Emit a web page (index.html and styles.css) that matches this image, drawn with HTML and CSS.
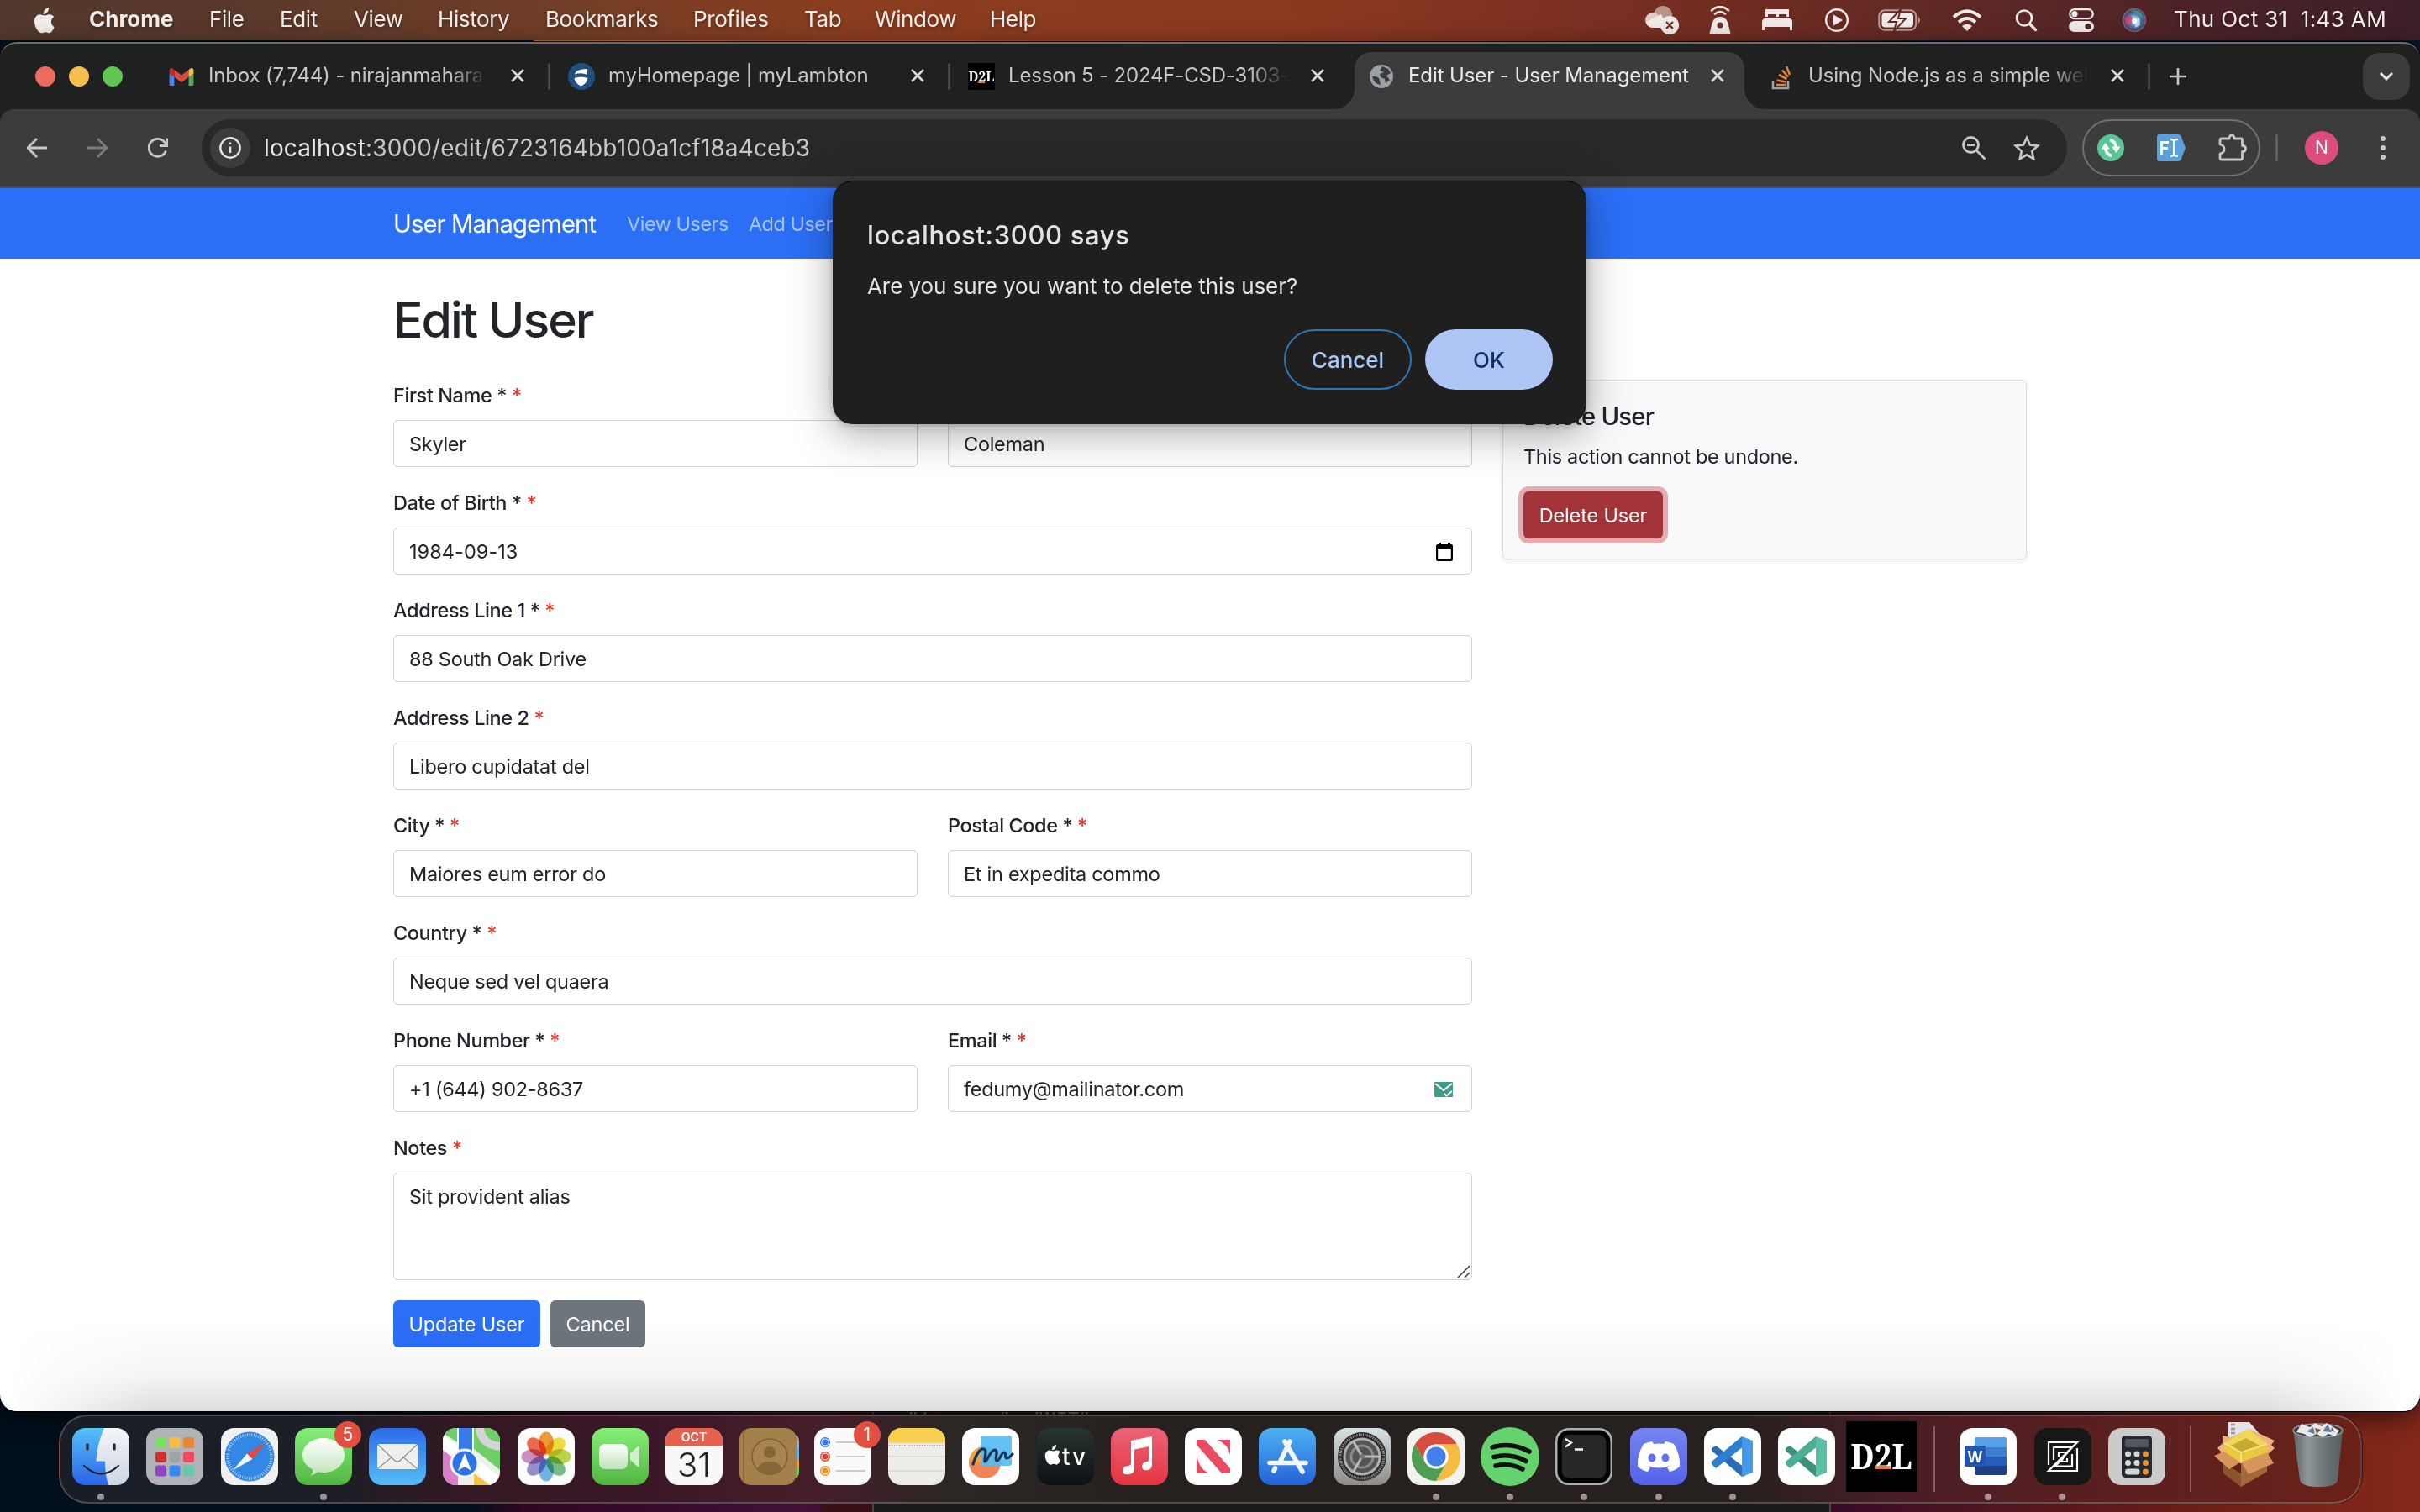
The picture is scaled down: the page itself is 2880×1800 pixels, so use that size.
FILE: index.html
```html
<!DOCTYPE html>
<html lang="en">
<head>
<meta charset="utf-8">
<title>Edit User - User Management</title>
<link rel="stylesheet" href="styles.css">
</head>
<body>
<div class="desktop">
  <div class="editor-behind"><code>"license": "MIT"</code></div>
  <div class="wall-wedge"></div>

  <header class="menubar">
    <nav class="menus">
      <svg class="apple" viewBox="0 0 26 31" width="26" height="31"><path fill="#efecea" d="M18 0c.3 2.400-.7 4.400-1.900 5.800-1.200 1.300-2.800 2.200-4.400 2.100-.3-2.200.8-4.300 1.900-5.500C14.800 1.100 16.600.1 18 0zM24.600 23.200c-1 2.600-3.300 7-6 7.100-1.700 0-2.300-1.100-4.500-1.100s-2.900 1.100-4.500 1.100C5.600 30.400 1 23.100 1 16.600c0-5.200 3.200-8.300 6.600-8.300 2 0 3.900 1.300 5.400 1.300 1.300 0 3.500-1.500 6-1.400 1.800.1 3.900.9 5.200 2.900-4.700 2.900-4 9.700.4 12.100z"/></svg>
      <b>Chrome</b><span>File</span><span>Edit</span><span>View</span><span>History</span><span>Bookmarks</span><span>Profiles</span><span>Tab</span><span>Window</span><span>Help</span>
    </nav>
    <div class="status">
      <svg viewBox="0 0 42 34" width="42" height="34"><circle cx="22" cy="11" r="11" fill="#b99388"/><circle cx="10" cy="17" r="9" fill="#e0cdc8"/><path d="M2 19l18-9 8 16H10q-7-1-8-7z" fill="#efe9e7"/><circle cx="30" cy="23" r="11" fill="#efe9e7"/><path d="M26 19l8 8m0-8l-8 8" stroke="#6d2d22" stroke-width="2.200"/></svg>
      <svg viewBox="0 0 26 34" width="26" height="34" fill="none" stroke="#efe9e7"><path d="M3 5.500q10-9 20 0M7 9.500q6-5 12 0" stroke-width="2.600" stroke-linecap="round"/><path d="M13 13c5 0 8 3 9.500 8l3 12H.5l3-12C5 16 8 13 13 13z" fill="#efe9e7" stroke="none"/><circle cx="13" cy="23" r="3.500" fill="#6d2d22" stroke="none"/></svg>
      <svg viewBox="0 0 36 26" width="36" height="26" fill="#efe9e7"><path d="M4 0h28v9h-3V6h-9v3h-4V6H7v3H4zM3 11h30q3 1 3 4v10h-3v-4H3v4H0V15q0-3 3-4z"/></svg>
      <svg viewBox="0 0 30 30" width="30" height="30"><circle cx="15" cy="15" r="12.800" fill="none" stroke="#efe9e7" stroke-width="2.400"/><path d="M11 8.500l11 6.500-11 6.500z" fill="#efe9e7"/></svg>
      <svg viewBox="0 0 52 26" width="52" height="26"><rect x="1.200" y="1.200" width="44" height="23.600" rx="7" fill="none" stroke="#b49a96" stroke-width="2"/><rect x="4.500" y="4.500" width="37.500" height="17" rx="4" fill="#efe9e7"/><path d="M48 9q4 4 0 8z" fill="#b49a96"/><path d="M27 0L13 15h9l-3 11 14-15h-9l3-11z" fill="#efe9e7" stroke="#5f2823" stroke-width="2"/></svg>
      <svg viewBox="0 0 36 26" width="36" height="26" fill="none" stroke="#efe9e7" stroke-width="4"><path d="M2 9.500q16-14.500 32 0M8 15.500q10-9 20 0"/><path d="M12 20q6-5 12 0l-6 6z" fill="#efe9e7" stroke="none"/></svg>
      <svg viewBox="0 0 28 28" width="28" height="28" fill="none" stroke="#efe9e7" stroke-width="2.600"><circle cx="12" cy="11.500" r="9"/><path d="M18.500 18.500l7 7" stroke-width="3.400" stroke-linecap="round"/></svg>
      <svg viewBox="0 0 30 28" width="30" height="28"><rect x="1.200" y="1.200" width="27.600" height="11" rx="5.500" fill="none" stroke="#efe9e7" stroke-width="2.200"/><circle cx="7" cy="6.700" r="3.600" fill="#efe9e7"/><rect x="0" y="15" width="30" height="13" rx="6.500" fill="#efe9e7"/><circle cx="23" cy="21.500" r="3.600" fill="#54262a"/></svg>
      <svg viewBox="0 0 28 28" width="28" height="28"><defs><radialGradient id="siri"><stop offset="0" stop-color="#fff"/><stop offset=".25" stop-color="#9fc3e8"/><stop offset=".6" stop-color="#4a6f9a"/><stop offset="1" stop-color="#4b3b5c"/></radialGradient></defs><circle cx="14" cy="14" r="13.400" fill="url(#siri)" stroke="#7d6f80" stroke-width="1.200"/><path d="M2 12q6-9 12 3-6 8-10 4z" fill="#d23d70" opacity=".75"/><path d="M10 2q14 0 15 10-8-5-15-10z" fill="#2fa982" opacity=".75"/><path d="M14 14l6-3 1 9-6 3z" fill="#cfe6f8" opacity=".8"/><circle cx="14" cy="15" r="3" fill="#fff"/></svg>
      <span class="clock">Thu Oct 31&nbsp; 1:43 AM</span>
    </div>
  </header>

  <main class="window">
    <div class="tabstrip">
      <div class="lights"><i class="red"></i><i class="yellow"></i><i class="green"></i></div>
      <div class="tab first">
        <svg class="fav" viewBox="0 0 32 24" width="30" height="23"><path fill="#4a84ee" d="M1 8v13q0 2 2 2h4V11z"/><path fill="#55a95a" d="M31 8v13q0 2-2 2h-4V11z"/><path fill="#d94c3f" d="M7 3l9 7 9-7v9l-9 7-9-7z"/><path fill="#b7342b" d="M1 4q0-3 3-3l3 2v9L1 8z"/><path fill="#f2bd42" d="M31 4q0-3-3-3l-3 2v9l6-4z"/></svg>
        <span class="title fade">Inbox (7,744) - nirajanmahara</span><svg class="x" viewBox="0 0 16 16"><path d="M1 1l14 14M15 1L1 15"/></svg>
      </div>
      <div class="tab">
        <svg class="fav" viewBox="0 0 32 32" width="32" height="32"><circle cx="16" cy="16" r="16" fill="#205081"/><path fill="#fff" d="M8 13.500Q9 7 23 7v7q-7-3-15-.5zM7.500 18q8.500-3 16 0-.5 6-8 9.500Q8 24 7.500 18z"/></svg>
        <span class="title">myHomepage | myLambton</span><svg class="x" viewBox="0 0 16 16"><path d="M1 1l14 14M15 1L1 15"/></svg>
      </div>
      <div class="tab nobar">
        <svg class="fav" viewBox="0 0 32 32" width="32" height="32"><rect width="32" height="32"/><text x="16" y="22" text-anchor="middle" textLength="31" lengthAdjust="spacingAndGlyphs" class="serif" font-size="17" fill="#fff">D2L</text><path d="M12 22h8v2h-8z" fill="#e87d37"/></svg>
        <span class="title fade">Lesson 5 - 2024F-CSD-3103-</span><svg class="x" viewBox="0 0 16 16"><path d="M1 1l14 14M15 1L1 15"/></svg>
      </div>
      <div class="tab active nobar">
        <svg class="fav" viewBox="0 0 28 28" width="28" height="28"><circle cx="14" cy="14" r="14" fill="#9aa0a6"/><path fill="#3c3c3c" d="M3 14q4-1 8 2l1 3 1 5q-8-1-10-10zM15 2l7 3 3 5-5 3 4 5-5 4-1-5-5-2-1-4 5-2-5-2z"/></svg>
        <span class="title">Edit User - User Management</span><svg class="x" viewBox="0 0 16 16"><path d="M1 1l14 14M15 1L1 15"/></svg>
      </div>
      <div class="tab">
        <svg class="fav" viewBox="0 0 32 32" width="32" height="32" fill="none"><path d="M6 21v9h18v-9" stroke="#9d9fa3" stroke-width="2.600"/><path d="M10 26h11M10.500 20.500l10.500 2M13 14l9.500 5M17 8.500l7 8M22 4l4 10" stroke="#e2823c" stroke-width="2.600"/></svg>
        <span class="title fade">Using Node.js as a simple web</span><svg class="x" viewBox="0 0 16 16"><path d="M1 1l14 14M15 1L1 15"/></svg>
      </div>
      <svg class="plus" viewBox="0 0 20 20" width="20" height="20"><path d="M10 0v20M0 10h20" stroke="#c8c8c8" stroke-width="2.600"/></svg>
      <div class="tabsearch"><svg viewBox="0 0 16 10" width="16" height="10"><path d="M1 1l7 7 7-7" fill="none" stroke="#e3e3e3" stroke-width="3"/></svg></div>
    </div>

    <div class="toolbar">
      <svg class="tool" viewBox="0 0 24 24"><path d="M12 1L1 12l11 11M1.500 12H24" stroke="#c7c7c7"/></svg>
      <svg class="tool" viewBox="0 0 24 24"><path d="M12 1l11 11-11 11M22.500 12H0" stroke="#7b7b7b"/></svg>
      <svg class="tool" viewBox="0 0 24 24"><path d="M21.500 15.500A10.500 10.500 0 1 1 20 5.500l2.500 3.500M23 .5V9.500H14" stroke="#c7c7c7"/></svg>
      <div class="omnibox">
        <div class="info"><svg viewBox="0 0 26 26" width="26" height="26"><circle cx="13" cy="13" r="11.700" fill="none" stroke="#e3e3e3" stroke-width="2.400"/><path d="M13 11.500v7.500M13 6.500v2.600" stroke="#e3e3e3" stroke-width="2.600"/></svg></div>
        <span class="url"><em>localhost</em>:3000/edit/6723164bb100a1cf18a4ceb3</span>
        <svg viewBox="0 0 30 30" width="30" height="30" fill="none" stroke="#c7c7c7" stroke-width="2.800"><circle cx="11.500" cy="11.500" r="9"/><path d="M7 11.500h9M18.500 18.500L28.500 28.500"/></svg>
        <svg class="star" viewBox="0 0 32 30" width="32" height="30" fill="none" stroke="#c7c7c7" stroke-width="2.600"><path d="M16 3l3.900 8.600 9.300 1-7 6.300 2 9.200-8.200-4.800-8.200 4.800 2-9.200-7-6.300 9.300-1z"/></svg>
      </div>
      <div class="extensions">
        <svg viewBox="0 0 32 32" width="32" height="32"><circle cx="16" cy="16" r="16" fill="#58c795"/><g fill="none" stroke="#fff" stroke-width="3.600"><path d="M17 25.500q-7-2-7.300-10M15 6.500q7 2 7.300 10"/></g><path fill="#fff" d="M4.500 17.500L9.500 10l5.500 7.500zM17 14.500h10.500L22.500 22z"/></svg>
        <svg viewBox="0 0 34 32" width="34" height="32"><path d="M3 0h22q3 0 4 3l5 13-5 13q-1 3-4 3H3q-3 0-3-3V3q0-3 3-3z" fill="#5ba0da"/><path d="M5.500 24V9.500H14M5.500 16.500H13" stroke="#fff" stroke-width="3" fill="none"/><path d="M16 6q4 0 4 3v14q0 3-4 3M25 6q-5 0-5 3M20 23q0 3 5 3" stroke="#fff" stroke-width="2" fill="none"/></svg>
        <svg viewBox="0 0 34 32" width="34" height="32" fill="none" stroke="#c7c7c7" stroke-width="2.800" stroke-linejoin="round"><path d="M4 5h9q0-4 3-4t3 4h8q1.500 0 1.500 2v6.500q4 0 4 3.500t-4 3.500v7.500q0 2-2 2H4q-2 0-2-2v-5q5-1 5-5.500T2 12V7Q2 5 4 5z"/></svg>
      </div>
      <i class="bar"></i>
      <div class="avatar">N</div>
      <div class="dots"><i></i><i></i><i></i></div>
    </div>

    <section class="page">
      <nav class="navbar"><a class="brand">User Management</a><a>View Users</a><a>Add User</a></nav>
      <div class="content">
        <h1>Edit User</h1>
        <div class="columns">
          <form class="form">
            <div class="field half"><label>First Name * <u>*</u></label><div class="input">Skyler</div></div>
            <div class="field half"><label>Last Name * <u>*</u></label><div class="input">Coleman</div></div>
            <div class="field"><label>Date of Birth * <u>*</u></label><div class="input date">1984-09-13<svg viewBox="0 0 20 22" width="20" height="22"><path d="M3 0h3v2h8V0h3v2h1q2 0 2 2v16q0 2-2 2H2q-2 0-2-2V4q0-2 2-2h1zM2.200 7v12.800h15.600V7z" fill-rule="evenodd"/></svg></div></div>
            <div class="field"><label>Address Line 1 * <u>*</u></label><div class="input">88 South Oak Drive</div></div>
            <div class="field"><label>Address Line 2 <u>*</u></label><div class="input">Libero cupidatat del</div></div>
            <div class="field half"><label>City * <u>*</u></label><div class="input">Maiores eum error do</div></div>
            <div class="field half"><label>Postal Code * <u>*</u></label><div class="input">Et in expedita commo</div></div>
            <div class="field"><label>Country * <u>*</u></label><div class="input">Neque sed vel quaera</div></div>
            <div class="field half"><label>Phone Number * <u>*</u></label><div class="input">+1 (644) 902-8637</div></div>
            <div class="field half"><label>Email * <u>*</u></label><div class="input">fedumy@mailinator.com<svg viewBox="0 0 22 18" width="22" height="18"><rect width="22" height="18" rx="1" fill="#3f9c86"/><path d="M1 2l10 8L21 2" stroke="#fff" stroke-width="2" fill="none"/><path d="M12 14l2.500 2.500L21 11" stroke="#fff" stroke-width="2" fill="none"/></svg></div></div>
            <div class="field"><label>Notes <u>*</u></label><div class="input area">Sit provident alias<svg viewBox="0 0 16 16" width="16" height="16"><path d="M1 15L15 1M9 15l6-6" stroke="#444" stroke-width="1.600"/></svg></div></div>
            <div class="actions"><span class="btn update">Update User</span><span class="btn cancel">Cancel</span></div>
          </form>
          <aside class="card">
            <h5>Delete User</h5>
            <p>This action cannot be undone.</p>
            <span class="btn delete">Delete User</span>
          </aside>
        </div>
      </div>
      <div class="floor-shade"></div>
    </section>

    <div class="dialog">
      <h2>localhost:3000 says</h2>
      <p>Are you sure you want to delete this user?</p>
      <div class="choices"><span class="pill outline">Cancel</span><span class="pill solid">OK</span></div>
    </div>
  </main>

  <footer class="dock">
    <div class="slot run"><svg viewBox="0 0 68 68"><defs><linearGradient id="fb" x2="0" y2="1"><stop stop-color="#54c1f8"/><stop offset="1" stop-color="#2b63e8"/></linearGradient><linearGradient id="silver" x2="0" y2="1"><stop stop-color="#f4f5f6"/><stop offset="1" stop-color="#cdd6e2"/></linearGradient><clipPath id="sq"><rect width="68" height="68" rx="15.500"/></clipPath></defs><g clip-path="url(#sq)"><path fill="url(#fb)" d="M0 0h68v68H0z"/><path fill="url(#silver)" d="M38 0Q29 20 28.500 39.500H39Q39 56 43 68h25V0z"/></g><path d="M18 20v5M50 20v5" stroke="#26303c" stroke-width="3.500" stroke-linecap="round"/><path d="M14 45q20 19 41 0" fill="none" stroke="#172436" stroke-width="2.200" stroke-linecap="round"/></svg></div>
    <div class="slot"><svg viewBox="0 0 68 68"><rect width="68" height="68" rx="15.500" fill="#b1b2b6"/><g><rect x="11" y="11" width="13" height="13" rx="3" fill="#76e35a"/><rect x="27.500" y="11" width="13" height="13" rx="3" fill="#f5bd41"/><rect x="44" y="11" width="13" height="13" rx="3" fill="#e78735"/><rect x="11" y="28" width="13" height="13" rx="3" fill="#c9342c"/><rect x="27.500" y="28" width="13" height="13" rx="3" fill="#9ca4a8"/><rect x="44" y="28" width="13" height="13" rx="3" fill="#ec4c5e"/><rect x="11" y="44.500" width="13" height="13" rx="3" fill="#8f43c9"/><rect x="27.500" y="44.500" width="13" height="13" rx="3" fill="#3488f0"/><rect x="44" y="44.500" width="13" height="13" rx="3" fill="#66c9ae"/></g></svg></div>
    <div class="slot"><svg viewBox="0 0 68 68"><rect width="68" height="68" rx="15.500" fill="#f1f1f1"/><circle cx="34" cy="34" r="29.500" fill="#3388e6"/><circle cx="34" cy="34" r="26" fill="none" stroke="#c8e0fb" stroke-width="3.600" stroke-dasharray=".8 1.900"/><path d="M54 17L31 30.500l6.500 6.500z" fill="#e8463c"/><path d="M14 50.500L31 30.500l6.500 6.500z" fill="#f4f4f4"/></svg></div>
    <div class="slot run"><svg viewBox="0 0 68 68"><defs><linearGradient id="gr" x2="0" y2="1"><stop stop-color="#85ef79"/><stop offset="1" stop-color="#51b541"/></linearGradient><linearGradient id="pearl" x2="0" y2="1"><stop stop-color="#fff"/><stop offset="1" stop-color="#bfe3b8"/></linearGradient></defs><rect width="68" height="68" rx="15.500" fill="url(#gr)"/><path d="M34 12c14 0 25 9 25 20.500S48 53 34 53q-4 0-7-.8Q23 56 18.500 56.500q3-3 2.500-7Q9 43 9 32.500C9 21 20 12 34 12z" fill="url(#pearl)"/></svg><i class="badge">5</i></div>
    <div class="slot"><svg viewBox="0 0 68 68"><defs><linearGradient id="ml" x2="0" y2="1"><stop stop-color="#2c6ae8"/><stop offset="1" stop-color="#56bdf6"/></linearGradient></defs><rect width="68" height="68" rx="15.500" fill="url(#ml)"/><rect x="10" y="19" width="48" height="30" rx="3" fill="#efefee"/><path d="M11 20l19 18q4 4 8 0L57 20M11 48l17-14M57 48L40 34" fill="none" stroke="#8f9394" stroke-width="1.200"/></svg></div>
    <div class="slot"><svg viewBox="0 0 68 68"><g clip-path="url(#sq)"><path fill="#eef0ee" d="M0 0h68v68H0z"/><path fill="#6fcf66" d="M0 0h17v17L0 6zM37 0h31v50L37 25z"/><path d="M68 22q-22-2-24-22" fill="none" stroke="#d3d4d8" stroke-width="10"/><path fill="#d77fc7" d="M0 26l18 14v28H0z"/><path fill="#f3c547" d="M37 47l22 21H37z"/><path fill="#fff" d="M0 8l68 50v10H56L0 26z"/><path fill="#377ae8" stroke="#fff" stroke-width="2" d="M18-2h18v44H18z"/></g><circle cx="26" cy="42" r="16" fill="#2c74e8" stroke="#f2f4f8" stroke-width="3"/><path d="M26 30l8 21-8-5-8 5z" fill="#fff"/></svg></div>
    <div class="slot"><svg viewBox="0 0 68 68"><rect width="68" height="68" rx="15.500" fill="#fcfcfb"/><g class="petals"><ellipse cx="34" cy="18" rx="9" ry="13.500" fill="#f09a38"/><ellipse cx="34" cy="18" rx="9" ry="13.500" fill="#f0df43" transform="rotate(45 34 34)"/><ellipse cx="34" cy="18" rx="9" ry="13.500" fill="#bdd54c" transform="rotate(90 34 34)"/><ellipse cx="34" cy="18" rx="9" ry="13.500" fill="#79c08a" transform="rotate(135 34 34)"/><ellipse cx="34" cy="18" rx="9" ry="13.500" fill="#73b6e4" transform="rotate(180 34 34)"/><ellipse cx="34" cy="18" rx="9" ry="13.500" fill="#9a90d0" transform="rotate(225 34 34)"/><ellipse cx="34" cy="18" rx="9" ry="13.500" fill="#cd92c4" transform="rotate(270 34 34)"/><ellipse cx="34" cy="18" rx="9" ry="13.500" fill="#ee6a50" transform="rotate(315 34 34)"/></g></svg></div>
    <div class="slot"><svg viewBox="0 0 68 68"><rect width="68" height="68" rx="15.500" fill="url(#gr)"/><rect x="9" y="19" width="34" height="30" rx="7" fill="url(#pearl)"/><path d="M46 30l9-8q2-1 2 1v22q0 2-2 1l-9-8z" fill="#d3edcf"/></svg></div>
    <div class="slot"><svg viewBox="0 0 68 68"><g clip-path="url(#sq)"><path fill="#f9f8f6" d="M0 0h68v68H0z"/><path fill="#e6604f" d="M0 0h68v21H0z"/></g><text x="34" y="16" text-anchor="middle" class="sans" font-size="14" font-weight="600" fill="#fff">OCT</text><text x="34" y="58" text-anchor="middle" class="sans" font-size="40" font-weight="300" fill="#222" textLength="40">31</text></svg></div>
    <div class="slot"><svg viewBox="0 0 68 68"><path d="M60 9h7q3 2 3 8v34q0 6-3 8h-7z" fill="#e8973a"/><path d="M60 9h7q3 2 3 14H60z" fill="#a4b6b4"/><path d="M60 24h10v14H60z" fill="#65b2e0"/><path d="M60 48h10q0 8-3 11h-7z" fill="#63cf62"/><rect x="-1" width="68" height="68" rx="14" fill="#a4804b"/><path d="M4 3v62" stroke="#866636" stroke-width="1.500"/><circle cx="35" cy="34" r="21" fill="#a8844e" stroke="#7d6035" stroke-width="1.500"/><circle cx="35" cy="29" r="7" fill="#846639"/><path d="M20 49q4-9 15-9t15 9q-6 6-15 6t-15-6z" fill="#846639"/></svg></div>
    <div class="slot"><svg viewBox="0 0 68 68"><rect width="68" height="68" rx="15.500" fill="#fafaf9"/><g fill="none" stroke-width="1.400"><circle cx="13" cy="17" r="5.300" stroke="#2f78ee"/><circle cx="13" cy="34" r="5.300" stroke="#dc4238"/><circle cx="13" cy="51" r="5.300" stroke="#e8912d"/></g><circle cx="13" cy="17" r="3.600" fill="#2f78ee"/><circle cx="13" cy="34" r="3.600" fill="#dc4238"/><circle cx="13" cy="51" r="3.600" fill="#e8912d"/><path d="M26 17h35M26 34h35M26 51h35" stroke="#bdbdbd" stroke-width="1.500"/></svg><i class="badge">1</i></div>
    <div class="slot"><svg viewBox="0 0 68 68"><g clip-path="url(#sq)"><path fill="#eeece8" d="M0 0h68v68H0z"/><path fill="#f6cf4c" d="M0 0h68v17H0z"/></g><path d="M0 18h68M0 34h68M0 51h68" stroke="#cfcdc9" stroke-width="1.200"/><path d="M1 20.500h66" stroke="#9c9a96" stroke-width="1.200" stroke-dasharray="1.200 1.800"/></svg></div>
    <div class="slot"><svg viewBox="0 0 68 68"><rect width="68" height="68" rx="15.500" fill="#fff"/><circle cx="27" cy="41" r="19" fill="#ef8558"/><path d="M8 41a19 19 0 0 1 19-19v19z" fill="#f1a343"/><rect x="22" y="9" width="37" height="36" rx="3" fill="#55bdf0" opacity=".92"/><path d="M13 43C17 30 22 24 26 25c5 2-1 14 1 15 3 1 6-14 12-14 5 1-1 12 2 13 4 1 5-10 9-10 3 0 0 6 3 7 3 0 5-3 7-5" fill="none" stroke="#15365c" stroke-width="3.200" stroke-linecap="round"/></svg></div>
    <div class="slot"><svg viewBox="0 0 68 68"><defs><linearGradient id="tv" x2="0" y2="1"><stop stop-color="#283532"/><stop offset="1" stop-color="#0d1114"/></linearGradient></defs><rect width="68" height="68" rx="15.500" fill="url(#tv)"/><path fill="#fff" transform="translate(9 20) scale(.78)" d="M18 0c.3 2.400-.7 4.400-1.900 5.800-1.200 1.300-2.800 2.200-4.400 2.100-.3-2.200.8-4.300 1.900-5.500C14.800 1.100 16.600.1 18 0zM24.600 23.200c-1 2.600-3.300 7-6 7.100-1.700 0-2.300-1.100-4.500-1.100s-2.900 1.100-4.500 1.100C5.600 30.400 1 23.100 1 16.600c0-5.200 3.200-8.300 6.600-8.300 2 0 3.900 1.300 5.400 1.300 1.300 0 3.500-1.500 6-1.400 1.800.1 3.900.9 5.200 2.900-4.700 2.900-4 9.700.4 12.100z"/><text x="30" y="44" class="sans" font-size="28" font-weight="500" fill="#fff" textLength="28">tv</text></svg></div>
    <div class="slot"><svg viewBox="0 0 68 68"><defs><linearGradient id="mu" x2="0" y2="1"><stop stop-color="#ea6377"/><stop offset="1" stop-color="#e63440"/></linearGradient></defs><rect width="68" height="68" rx="15.500" fill="url(#mu)"/><path d="M24 15l25-5v34q0 5-5 6-7 1-7-4 0-5 6-6 2 0 2-3V22l-17 3.500V48q0 6-6 7-8 1-8-4 0-5 6-6 4 0 4-3z" fill="#fff"/></svg></div>
    <div class="slot"><svg viewBox="0 0 68 68"><rect width="68" height="68" rx="15.500" fill="#fff"/><path d="M14 14h10l30 34v6H44L14 20zM14 28v26h15q-14-6-15-26zM39 14h15v18q-2-12-15-18z" fill="#ea4b62"/></svg></div>
    <div class="slot"><svg viewBox="0 0 68 68"><defs><linearGradient id="as" x2="0" y2="1"><stop stop-color="#4db2f2"/><stop offset="1" stop-color="#2561d8"/></linearGradient></defs><rect width="68" height="68" rx="15.500" fill="url(#as)"/><path d="M13 41.500h43M37 16L25 41M31 16l21 36M18 51l1.500-3" stroke="#f2f6fb" stroke-width="5.600" stroke-linecap="round"/></svg></div>
    <div class="slot"><svg viewBox="0 0 68 68"><defs><linearGradient id="st" x2="0" y2="1"><stop stop-color="#d7e0e4"/><stop offset="1" stop-color="#8d8c88"/></linearGradient></defs><rect width="68" height="68" rx="15.500" fill="url(#st)"/><circle cx="34" cy="34" r="29" fill="#2b2b2b"/><circle cx="34" cy="34" r="26" fill="none" stroke="#8f8f8d" stroke-width="3" stroke-dasharray="1.300 1.200"/><circle cx="34" cy="34" r="21" fill="#555" stroke="#aeb0b0" stroke-width="3"/><circle cx="34" cy="34" r="13" fill="none" stroke="#8b8b8a" stroke-width="3"/><path d="M34 34h22M34 34L23 15M34 34L23 53" stroke="#b9bbbb" stroke-width="3"/><circle cx="34" cy="34" r="3" fill="#777"/></svg></div>
    <div class="slot run"><svg viewBox="0 0 68 68"><rect width="68" height="68" rx="15.500" fill="#f2f2f1"/><path fill="#d84d3d" d="M8.900 19.500A29 29 0 0 1 59.100 19.500H34A14.500 14.500 0 0 0 21.400 41.250z"/><path fill="#f2bd42" d="M59.100 19.500A29 29 0 0 1 34 63L46.600 41.250A14.500 14.500 0 0 0 34 19.500z"/><path fill="#4d9e53" d="M34 63A29 29 0 0 1 8.900 19.500L21.400 41.250A14.500 14.500 0 0 0 46.600 41.250z"/><circle cx="34" cy="34" r="14.500" fill="#fff"/><circle cx="34" cy="34" r="11.500" fill="#4280ea"/></svg></div>
    <div class="slot run"><svg viewBox="0 0 68 68"><circle cx="34" cy="34" r="35" fill="#65d36e"/><path d="M13 23q22-7 44 5M15 34.500q20-5 38 5M17 45q17-4 32 4" fill="none" stroke="#101310" stroke-linecap="round" stroke-width="5.500"/></svg></div>
    <div class="slot run"><svg viewBox="0 0 68 68"><rect width="68" height="68" rx="15.500" fill="#a6b0b2"/><rect x="2.500" y="2.500" width="63" height="63" rx="13.500" fill="#000"/><rect x="7.500" y="8" width="53" height="52" rx="9" fill="#272727"/><path d="M12 13l7 4.500-7 5M23 25.500h10" fill="none" stroke="#fff" stroke-width="2.300"/></svg></div>
    <div class="slot run"><svg viewBox="0 0 68 68"><defs><linearGradient id="dc" x2="0" y2="1"><stop stop-color="#7585ef"/><stop offset="1" stop-color="#5363ea"/></linearGradient></defs><rect width="68" height="68" rx="15.500" fill="url(#dc)"/><path d="M26 16l2 3q6-1 12 0l2-3q6 1 10 3 8 13 7 27-6 5-12 6l-3-5 3-2q-13 5-26 0l3 2-3 5q-6-1-12-6-1-14 7-27 5-2 10-3z" fill="#fff"/><ellipse cx="26" cy="35.500" rx="4.500" ry="5" fill="#6372ec"/><ellipse cx="42" cy="35.500" rx="4.500" ry="5" fill="#6372ec"/></svg></div>
    <div class="slot run"><svg viewBox="0 0 68 68"><rect width="68" height="68" rx="15.500" fill="#fff"/><path fill="#2b6cb5" d="M9 24l5-3 34 26 1 10-4 1L9 27z"/><path fill="#2f7fd0" d="M9 43l5 5 34-27-3-11L9 40z"/><path fill="#4499e8" d="M45 10l13 5v38l-13 5z"/></svg></div>
    <div class="slot"><svg viewBox="0 0 68 68"><rect width="68" height="68" rx="15.500" fill="#fff"/><path fill="#3c917a" d="M9 24l5-3 34 26 1 10-4 1L9 27z"/><path fill="#4cae94" d="M9 43l5 5 34-27-3-11L9 40z"/><path fill="#5bbfa6" d="M45 10l13 5v38l-13 5z"/></svg></div>
    <div class="slot"><svg class="big" viewBox="0 0 84 84"><path d="M0 0h84v84H0z"/><text x="42" y="57" text-anchor="middle" textLength="73" lengthAdjust="spacingAndGlyphs" class="serif" font-size="41" fill="#fff">D2L</text><path d="M34 53h18v4H34z" fill="#e87d37"/></svg></div>
    <i class="split"></i>
    <div class="slot run"><svg viewBox="0 0 68 68"><rect width="68" height="68" rx="15.500" fill="#fff"/><path fill="#58a2e9" d="M20 11h34q2 0 2 2v10H18V13q0-2 2-2z"/><path fill="#3c7ed0" d="M18 23h38v11H18z"/><path fill="#2a5cbb" d="M18 34h38v11H18z"/><path fill="#1c3f88" d="M18 45h38v9q0 2-2 2H20q-2 0-2-2z"/><rect x="6" y="21" width="25" height="25" rx="2" fill="#2453b0"/><text x="18.500" y="40.500" text-anchor="middle" class="sans" font-size="18" font-weight="600" fill="#fff">W</text></svg></div>
    <div class="slot run"><svg viewBox="0 0 68 68"><rect width="68" height="68" rx="15.500" fill="#171717"/><path d="M17 44V17h34L17 51h34V24M23 38V23h22L25 45.500h20V31M29 34v-5h9l-6 11h7v-4" fill="none" stroke="#fff" stroke-width="2.200"/></svg></div>
    <div class="slot"><svg viewBox="0 0 68 68"><rect width="68" height="68" rx="15.500" fill="#cbcbc9"/><rect x="16" y="9" width="36" height="50" rx="4.500" fill="#272b31"/><rect x="20" y="13" width="28" height="10" rx="2" fill="#53575b"/><g fill="#d5d6d6"><circle cx="23.500" cy="31" r="3.500"/><circle cx="34" cy="31" r="3.500"/><circle cx="23.500" cy="41.500" r="3.500"/><circle cx="34" cy="41.500" r="3.500"/><rect x="20" y="48.500" width="17.500" height="7" rx="3.500"/></g><g fill="#ea9132"><circle cx="44.500" cy="31" r="3.500"/><circle cx="44.500" cy="41.500" r="3.500"/><circle cx="44.500" cy="52" r="3.500"/></g></svg></div>
    <i class="split"></i>
    <div class="slot"><svg class="big" viewBox="0 0 84 84"><path d="M22 1h26l12 14v30H22z" fill="#e4e4e6"/><path d="M26 4h5M26 9h5M26 14h5" stroke="#999" stroke-width="2.500"/><path d="M16 17l10 2 22-10 30 14-4 5 4 4-9 8-31 10-26-8 2-6-4-4 6-6z" fill="#ecb47c"/><path d="M17 50l21 12v16L17 62z" fill="#8a552c"/><path d="M38 48v30l31-18V38z" fill="#a2673a"/><path d="M18 26L47 9l22 18v10L38 50 18 39z" fill="#e8c93f"/><path d="M18 26L47 9l22 18-31 10z" fill="#f0d757"/><path d="M26 29l18-9 16 9-22 8z" fill="#c8a934"/><path d="M18 26l20 11 31-10M38 37v13" fill="none" stroke="#f8e98a" stroke-width="1.500"/><path d="M37 49L18 36 6 41l18 16zM38 49l31-12 8 13-30 13z" fill="#d8965d"/></svg></div>
    <div class="slot"><svg class="big" viewBox="0 0 84 84"><defs><linearGradient id="tr"><stop stop-color="#5d6569"/><stop offset=".3" stop-color="#90989b"/><stop offset=".6" stop-color="#70787c"/><stop offset="1" stop-color="#565d61"/></linearGradient></defs><path d="M12 10h59l-6 60q-1 8-22 8t-23-8z" fill="url(#tr)"/><ellipse cx="41.500" cy="11" rx="29.500" ry="8" fill="#373c40" stroke="#90979a" stroke-width="1.500"/><path d="M16 13l6-10 10 4 6-5 8 4 6-4 8 5 7 4-5 7-8-3-7 4-7-4-8 4-7-4z" fill="#e9e9e7"/><path d="M28 12l8-5 2 8zM47 12l6-8 5 9z" fill="#607fa0"/><path d="M38 8l7 2-5 5zM58 7l4 6-5-2z" fill="#7a5a50"/></svg></div>
  </footer>
</div>
</body>
</html>
```
FILE: styles.css
```css
* { box-sizing: border-box; }
body { margin: 0; font-family: Inter, "Liberation Sans", sans-serif; }
i, em, u { font-style: normal; text-decoration: none; }
.sans { font-family: Inter, sans-serif; }
.serif { font-family: "Noto Serif", "DejaVu Serif", "Liberation Serif", serif; font-weight: 700; }

.desktop {
  position: relative; width: 2880px; height: 1800px; overflow: hidden;
  display: flex; flex-direction: column;
  background:
    linear-gradient(90deg, #03101d 0 634px, #c4701f 636px, #b3521f 1100px, #7a2a18 2000px, #06152a 2300px, #0a1428 100%) 0 0 / 100% 72px no-repeat,
    linear-gradient(90deg, #020f1c 0, #03101b 560px, #300620 620px, #42103a 960px, #3c0d14 1030px, #3c0d14 1100px, #380b28 2180px, #471222 2300px, #6a1d18 2600px, #86291a 2880px);
}
.editor-behind {
  position: absolute; left: 1038px; top: 1600px; width: 1141px; height: 200px;
  background: #1b1b1c; border-left: 2px solid #4a4648; border-right: 2px solid #4a4648;
  padding: 78px 0 0 40px;
}
.editor-behind code { font: 23px/26px "Liberation Mono", monospace; color: #777; letter-spacing: -.2px; }
.wall-wedge {
  position: absolute; left: 960px; top: 1790px; width: 78px; height: 10px;
  background: #3a1016; clip-path: polygon(12px 0, 100% 0, 100% 100%, 20px 100%);
}

/* Menu bar */
.menubar {
  position: relative; height: 48px; flex: none; display: flex; justify-content: space-between; align-items: center;
  background: linear-gradient(90deg, #52382d 0, #5b392b 300px, #733e26 700px, #8b3d20 1000px, #8c3a1f 1500px, #7b2f22 1900px, #6b2b23 2150px, #562627 2450px, #3d1f29 2880px);
  color: #f3eeeb; font-size: 26px; text-shadow: 0 2px 4px rgba(0,0,0,.35);
}
.menus { display: grid; grid-template-columns: 66px 143px 84px 88px 100px 128px 176px 132px 84px 137px 100px; padding: 0 0 4px 40px; align-items: center; white-space: nowrap; letter-spacing: -.4px; }
.menus b { letter-spacing: 0; }
.menus .apple { margin-top: 4px; }
.status { display: grid; grid-template-columns: 77px 63px 74px 64px 88px 74px 65px 64px 61px 255px; align-items: center; padding-right: 38px; }
.clock { white-space: nowrap; letter-spacing: .35px; padding-bottom: 3px; }

/* Browser window */
.window {
  position: relative; margin-top: 2px; height: 1630px; flex: none; display: flex; flex-direction: column;
  border-radius: 20px; background: #1f2120; box-shadow: 0 0 0 1px #000, 0 8px 30px rgba(0,0,0,.6);
}
.tabstrip { height: 80px; flex: none; display: flex; align-items: center; border-radius: 20px 20px 0 0; border-top: 2px solid #696c6b; padding-left: 42px; }
.lights { display: flex; gap: 16px; width: 158px; }
.lights i { width: 24px; height: 24px; border-radius: 50%; }
.red { background: #ec6a5e; } .yellow { background: #f4bf4f; } .green { background: #61c554; }
.tab { position: relative; width: 476px; height: 68px; flex: none; display: flex; align-items: center; color: #c6c8c7; font-size: 24px; padding-left: 22px; }
.tab::after { content: ""; position: absolute; right: -1px; top: 18px; width: 3px; height: 32px; background: #454746; border-radius: 2px; }
.tab.nobar::after { content: none; }
.tab.first { width: 454px; padding-left: 0; }
.fav { flex: none; width: 32px; margin-right: 16px; }
.title { width: 336px; white-space: nowrap; letter-spacing: -.17px; position: relative; margin-top: -3px; }
.title.fade { -webkit-mask-image: linear-gradient(90deg, #000 85%, transparent 99%); mask-image: linear-gradient(90deg, #000 85%, transparent 99%); }
.x { width: 16px; height: 16px; margin-left: 24px; margin-top: -2px; flex: none; fill: none; stroke: #dadada; stroke-width: 2.600; }
.tab.active { width: 464px; margin-left: 6px; background: #3c3c3c; border-radius: 20px 20px 0 0; height: 68px; margin-top: 10px; padding: 0 0 10px 18px; color: #e8e8e8; }
.tab.active .fav { width: 28px; margin-right: 18px; }
.tab.active .title { letter-spacing: -.1px; }
.tab.active::before { content: ""; position: absolute; left: -24px; right: -24px; bottom: 0; height: 24px; background: radial-gradient(circle at 0 0, transparent 23.500px, #3c3c3c 24px) left / 24px 24px no-repeat, radial-gradient(circle at 100% 0, transparent 23.500px, #3c3c3c 24px) right / 24px 24px no-repeat; }
.tab.active + .tab { width: 482px; padding-left: 28px; }
.plus { margin-left: 24px; margin-top: -1px; }
.tabsearch { margin-left: auto; margin-right: 12px; width: 56px; height: 56px; border-radius: 20px; background: #3c3c3c; display: flex; align-items: center; justify-content: center; }

.toolbar { height: 94px; flex: none; display: flex; align-items: center; background: #3c3c3c; border-bottom: 2px solid #4a4a4a; border-radius: 16px 16px 0 0; padding: 0 36px 0 32px; }
.tool { width: 24px; height: 24px; margin-right: 48px; flex: none; fill: none; stroke-width: 2.800; }
.omnibox { width: 2220px; height: 68px; margin-left: -8px; border-radius: 34px; background: #282828; display: flex; align-items: center; padding: 0 32px 0 10px; flex: none; }
.info { width: 48px; height: 48px; border-radius: 50%; background: #3c3c3c; display: flex; align-items: center; justify-content: center; margin-right: 16px; }
.url { font-size: 28px; color: #c7c7c7; margin-right: auto; letter-spacing: .15px; }
.url em { color: #e8e8e8; }
.omnibox .star { margin-left: 32px; }
.extensions { width: 212px; height: 68px; margin-left: 18px; border: 2px solid #707070; border-radius: 34px; display: flex; align-items: center; justify-content: space-between; padding: 0 14px 0 16px; flex: none; }
.bar { width: 3px; height: 32px; background: #5f5f5f; margin: 0 32px 0 18px; border-radius: 2px; }
.avatar { width: 40px; height: 40px; border-radius: 50%; background: #dc4c7c; color: #fff; font: 21px/40px Inter, sans-serif; text-align: center; }
.dots { margin-left: auto; width: 16px; display: flex; flex-direction: column; align-items: center; gap: 5px; }
.dots i { width: 6px; height: 6px; border-radius: 50%; background: #c7c7c7; }

/* Web page */
.page { position: relative; flex: 1; background: #fff; border-radius: 0 0 20px 20px; overflow: hidden; color: #212529; font-size: 23.500px; line-height: 36px; letter-spacing: -.28px; }
.navbar { height: 84px; background: #2b6ff6; display: flex; align-items: center; padding: 1px 0 0 468px; gap: 24px; color: #a6c3fb; white-space: nowrap; letter-spacing: -.5px; }
.brand { color: #fff; font-size: 29.300px; width: 242px; margin-right: 12px; letter-spacing: -.92px; }
.content { padding: 37px 468px 0; }
h1 { margin: 0 0 35px; font-size: 59px; line-height: 72px; font-weight: 500; letter-spacing: -2px; }
.columns { display: grid; grid-template-columns: 1284px 624px; gap: 36px; align-items: start; }
.form { display: grid; grid-template-columns: 1fr 1fr; gap: 24px 36px; }
.field { grid-column: span 2; }
.field.half { grid-column: span 1; }
label { display: block; font-weight: 500; padding-top: 1px; margin-bottom: 11px; white-space: nowrap; letter-spacing: -.42px; }
label u { color: #ea3323; }
.input { position: relative; height: 56px; border: 1px solid #ced2d9; border-radius: 5px; padding: 10px 22px 8px 18px; display: flex; justify-content: space-between; align-items: center; }
.input.date { letter-spacing: .05px; }
.input.area { height: 128px; align-items: flex-start; }
.input.area svg { position: absolute; right: 1px; bottom: 1px; }
.actions { grid-column: span 2; display: flex; gap: 12px; }
.btn { height: 56px; border-radius: 6px; color: #fff; display: flex; align-items: center; justify-content: center; white-space: nowrap; padding-top: 1px; letter-spacing: -.15px; }
.update { width: 175px; background: #2b6ff6; }
.cancel { width: 113px; background: #6d757d; }
.card { height: 214px; border: 1px solid #d9dcdf; border-radius: 6px; background: #f8f9fb; padding: 25px 24px 24px; box-shadow: 0 3px 6px rgba(0,0,0,.08); }
.card h5 { margin: 0 0 12px; font-size: 29.300px; line-height: 36px; font-weight: 500; letter-spacing: -.75px; }
.card p { margin: 0 0 23px; letter-spacing: -.34px; }
.delete { width: 166px; background: #a13339; box-shadow: 0 0 0 6px #e6abb0; }
.floor-shade { position: absolute; left: 0; right: 0; bottom: 0; height: 110px; background: linear-gradient(180deg, rgba(0,0,0,0), rgba(0,0,0,.04) 60%, rgba(0,0,0,.13)); -webkit-mask-image: linear-gradient(90deg, transparent 10px, #000 180px, #000 2700px, transparent 2860px); mask-image: linear-gradient(90deg, transparent 10px, #000 180px, #000 2700px, transparent 2860px); }

/* Confirm dialog over the page */
.dialog { position: absolute; left: 991px; top: 165px; width: 897px; height: 290px; border-radius: 24px; background: #1f1f1f; border-top: 1px solid #000; color: #e3e3e3; padding: 42px 40px 0 41px; box-shadow: 0 10px 50px rgba(0,0,0,.35), 0 2px 10px rgba(0,0,0,.2); }
.dialog h2 { margin: 0 0 21px; font-size: 31px; line-height: 44px; font-weight: 500; letter-spacing: .65px; }
.dialog p { margin: 0; font-size: 26px; line-height: 36px; white-space: nowrap; letter-spacing: -.08px; }
.choices { display: flex; justify-content: flex-end; gap: 16px; margin-top: 33px; }
.pill { width: 152px; height: 72px; border-radius: 36px; display: flex; align-items: center; justify-content: center; font-size: 26px; font-weight: 500; }
.outline { border: 2px solid #2f77b3; color: #a8c7fa; }
.solid { background: #aec6f6; color: #0b2d6b; }

/* Dock */
.dock {
  position: relative; margin: 4px 0 0 70px; width: 2741px; height: 106px; flex: none; display: flex; padding-left: 4px;
  border: 2px solid rgba(255,255,255,.2); border-radius: 34px;
  background-color: #1a1f27;
  background-image: linear-gradient(90deg, #191e26 0, #1d1e26 320px, #331822 480px, #3a1727 700px, #451e2a 900px, #2c2624 1050px, #26201e 1300px, #26201e 2000px, #4a1e25 2200px, #5b2020 2450px, #6a2117 2741px);
  box-shadow: 0 0 0 1px rgba(0,0,0,.5);
}
.slot { position: relative; width: 88.270px; flex: none; display: flex; justify-content: center; padding-top: 14px; }
.slot svg { width: 68px; height: 68px; overflow: visible; }
.slot svg.big { width: 84px; height: 84px; margin-top: -8px; }
.petals ellipse { mix-blend-mode: multiply; }
.slot.run::after { content: ""; position: absolute; left: 40px; top: 92px; width: 8px; height: 8px; border-radius: 50%; background: rgba(230,215,215,.62); }
.badge { position: absolute; left: 57px; top: 6px; width: 32px; height: 32px; border-radius: 50%; background: #e24f40; color: #fff; font: 21px/32px Inter, sans-serif; text-align: center; }
.split { width: 39.500px; flex: none; display: flex; justify-content: center; }
.split::before { content: ""; width: 2px; height: 78px; margin-top: 12px; background: rgba(255,200,200,.35); }
```
